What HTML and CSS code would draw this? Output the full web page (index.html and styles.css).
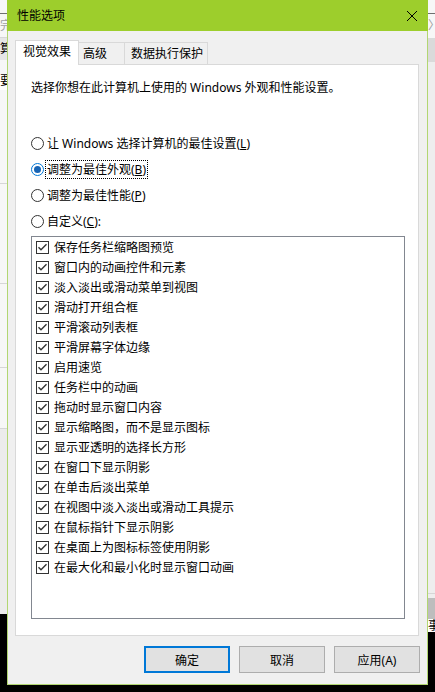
FILE: index.html
```html
<!DOCTYPE html>
<html>
<head>
    <meta charset="utf-8">
    <title>性能选项</title>
    <link rel="stylesheet" href="styles.css">
</head>
<body>
    <div class="edge edge-left">
        <div class="band light h13"></div>
        <div class="band dark-line"></div>
        <div class="band light h23 faded">完</div>
        <div class="band line"></div>
        <div class="band grey h22">算</div>
        <div class="band light h14"></div>
        <div class="band white h16">要</div>
        <div class="band light h93"></div>
        <div class="band line"></div>
        <div class="band light h99"></div>
        <div class="band line"></div>
        <div class="band light h83"></div>
        <div class="band line"></div>
        <div class="band light h60"></div>
        <div class="band line"></div>
        <div class="band dim h185"></div>
    </div>

    <div class="dialog">
        <div class="titlebar">
            <span class="title">性能选项</span>
            <svg class="close" width="10" height="10" viewBox="0 0 10 10">
                <path d="M0 0 L10 10 M10 0 L0 10" stroke="#000" stroke-width="1" fill="none"/>
            </svg>
        </div>

        <svg class="defs" width="0" height="0">
            <symbol id="check" viewBox="0 0 13 13">
                <rect x="0.5" y="0.5" width="12" height="12" fill="#fff" stroke="#333"/>
                <path d="M2.5 6.2 L5 8.7 L10.5 3.2" fill="none" stroke="#333" stroke-width="1.4"/>
            </symbol>
        </svg>

        <div class="content">
            <div class="tabs">
                <div class="tab active">视觉效果</div>
                <div class="tab tab-adv">高级</div>
                <div class="tab tab-dep">数据执行保护</div>
            </div>

            <div class="panel">
                <p class="intro">选择你想在此计算机上使用的 Windows 外观和性能设置。</p>

                <div class="radios">
                    <div class="radio"><span class="dot"></span><span class="text">让 Windows 选择计算机的最佳设置(<u>L</u>)</span></div>
                    <div class="radio"><span class="dot checked"></span><span class="text focus">调整为最佳外观(<u>B</u>)</span></div>
                    <div class="radio"><span class="dot"></span><span class="text">调整为最佳性能(<u>P</u>)</span></div>
                    <div class="radio"><span class="dot"></span><span class="text">自定义(<u>C</u>):</span></div>
                </div>

                <div class="listbox">
                    <div class="item"><svg class="chk"><use href="#check"/></svg><span>保存任务栏缩略图预览</span></div>
                    <div class="item"><svg class="chk"><use href="#check"/></svg><span>窗口内的动画控件和元素</span></div>
                    <div class="item"><svg class="chk"><use href="#check"/></svg><span>淡入淡出或滑动菜单到视图</span></div>
                    <div class="item"><svg class="chk"><use href="#check"/></svg><span>滑动打开组合框</span></div>
                    <div class="item"><svg class="chk"><use href="#check"/></svg><span>平滑滚动列表框</span></div>
                    <div class="item"><svg class="chk"><use href="#check"/></svg><span>平滑屏幕字体边缘</span></div>
                    <div class="item"><svg class="chk"><use href="#check"/></svg><span>启用速览</span></div>
                    <div class="item"><svg class="chk"><use href="#check"/></svg><span>任务栏中的动画</span></div>
                    <div class="item"><svg class="chk"><use href="#check"/></svg><span>拖动时显示窗口内容</span></div>
                    <div class="item"><svg class="chk"><use href="#check"/></svg><span>显示缩略图，而不是显示图标</span></div>
                    <div class="item"><svg class="chk"><use href="#check"/></svg><span>显示亚透明的选择长方形</span></div>
                    <div class="item"><svg class="chk"><use href="#check"/></svg><span>在窗口下显示阴影</span></div>
                    <div class="item"><svg class="chk"><use href="#check"/></svg><span>在单击后淡出菜单</span></div>
                    <div class="item"><svg class="chk"><use href="#check"/></svg><span>在视图中淡入淡出或滑动工具提示</span></div>
                    <div class="item"><svg class="chk"><use href="#check"/></svg><span>在鼠标指针下显示阴影</span></div>
                    <div class="item"><svg class="chk"><use href="#check"/></svg><span>在桌面上为图标标签使用阴影</span></div>
                    <div class="item"><svg class="chk"><use href="#check"/></svg><span>在最大化和最小化时显示窗口动画</span></div>
                </div>
            </div>

            <div class="buttons">
                <button class="btn default">确定</button>
                <button class="btn">取消</button>
                <button class="btn">应用(A)</button>
            </div>
        </div>
    </div>

    <div class="edge edge-right">
        <div class="band light h13"></div>
        <div class="band dark-line"></div>
        <div class="band light h24 faded">〉</div>
        <div class="band grey2 h24"></div>
        <div class="band pale h531"></div>
        <div class="band line"></div>
        <div class="band pale h4"></div>
        <div class="band mid h21"></div>
        <div class="band white h13">事</div>
    </div>
</body>
</html>
```

FILE: styles.css
```css
body {
    margin: 0;
    width: 435px;
    height: 692px;
    display: flex;
    align-items: flex-start;
    background: #000;
    font-family: "Noto Sans", "Noto Sans CJK SC", sans-serif;
    font-size: 12px;
    color: #000;
    overflow: hidden;
}

/* bits of the windows behind the dialog */
.edge {
    width: 7px;
    display: flex;
    flex-direction: column;
    overflow: hidden;
}

.band {
    flex-shrink: 0;
    overflow: hidden;
    white-space: nowrap;
    font-size: 12px;
    line-height: 14px;
}

.edge-left .band {
    text-align: right;
}

.light { background: #f7f7f7; }
.white { background: #fff; }
.grey { background: #e6e6e6; padding-top: 4px; box-sizing: border-box; }
.grey2 { background: #dadada; }
.pale { background: #eeeeee; }
.dim { background: #ececec; }
.mid { background: #bdbdbd; }
.faded { color: #a0a0a0; padding-top: 5px; box-sizing: border-box; }
.line { height: 1px; background: #d6d6d6; }
.dark-line { height: 1px; background: #707070; }

.h4 { height: 4px; }
.h13 { height: 13px; }
.h14 { height: 14px; }
.h16 { height: 16px; }
.h21 { height: 21px; }
.h22 { height: 22px; }
.h23 { height: 23px; }
.h24 { height: 24px; }
.h60 { height: 60px; }
.h83 { height: 83px; }
.h93 { height: 93px; }
.h99 { height: 99px; }
.h185 { height: 185px; }
.h531 { height: 531px; }

/* dialog */
.dialog {
    width: 421px;
    height: 685px;
    box-sizing: border-box;
    border: 1px solid #b2d672;
    border-top: 0;
    background: #f0f0f0;
    display: flex;
    flex-direction: column;
}

.titlebar {
    height: 31px;
    margin: 0 -1px;
    padding: 0 11px 0 10px;
    background: #9dce2c;
    display: flex;
    align-items: center;
    justify-content: space-between;
    flex-shrink: 0;
}

.title {
    line-height: 16px;
}

.close {
    display: block;
}

.defs {
    display: block;
    width: 0;
    height: 0;
}

.content {
    flex: 1;
    padding: 0 7px;
    display: flex;
    flex-direction: column;
}

.tabs {
    height: 33px;
    display: flex;
    align-items: flex-end;
    flex-shrink: 0;
}

.tab {
    height: 22px;
    box-sizing: border-box;
    border: 1px solid #d9d9d9;
    border-bottom: 0;
    margin-left: -1px;
    padding-top: 1px;
    line-height: 20px;
    background: #f0f0f0;
    white-space: nowrap;
}

.tab.active {
    width: 64px;
    height: 25px;
    margin-left: 0;
    margin-bottom: -1px;
    padding-left: 7px;
    background: #fff;
    position: relative;
    z-index: 1;
}

.tab-adv {
    width: 47px;
    padding-left: 4px;
}

.tab-dep {
    width: 84px;
    padding-left: 6px;
}

.panel {
    width: 404px;
    height: 572px;
    box-sizing: border-box;
    border: 1px solid #d9d9d9;
    background: #fff;
    padding: 13px 0 0 15px;
    flex-shrink: 0;
}

.intro {
    margin: 0;
    line-height: 20px;
    white-space: nowrap;
}

.radios {
    margin-top: 32px;
}

.radio {
    height: 26px;
    display: flex;
    align-items: center;
}

.dot {
    width: 13px;
    height: 13px;
    box-sizing: border-box;
    border: 1px solid #333;
    border-radius: 50%;
    margin-right: 1px;
    background: #fff;
    display: flex;
    align-items: center;
    justify-content: center;
}

.dot.checked {
    border-color: #0078d7;
}

.dot.checked::after {
    content: "";
    width: 7px;
    height: 7px;
    border-radius: 50%;
    background: #1864b4;
}

.text {
    border: 1px dotted transparent;
    padding: 1px;
    line-height: 15px;
    white-space: nowrap;
}

.text.focus {
    border-color: #000;
}

.listbox {
    width: 374px;
    height: 383px;
    box-sizing: border-box;
    margin-top: 2px;
    border: 1px solid #828790;
    padding-left: 4px;
}

.item {
    height: 20px;
    display: flex;
    align-items: center;
    white-space: nowrap;
}

.chk {
    width: 13px;
    height: 13px;
    margin-right: 5px;
    flex-shrink: 0;
}

.buttons {
    display: flex;
    justify-content: flex-end;
    gap: 9px;
    padding-top: 10px;
}

.btn {
    width: 86px;
    height: 27px;
    box-sizing: border-box;
    border: 1px solid #adadad;
    background: #e1e1e1;
    font: inherit;
    color: #000;
    padding: 0;
    display: flex;
    align-items: center;
    justify-content: center;
}

.btn.default {
    border: 2px solid #0078d7;
}
```
